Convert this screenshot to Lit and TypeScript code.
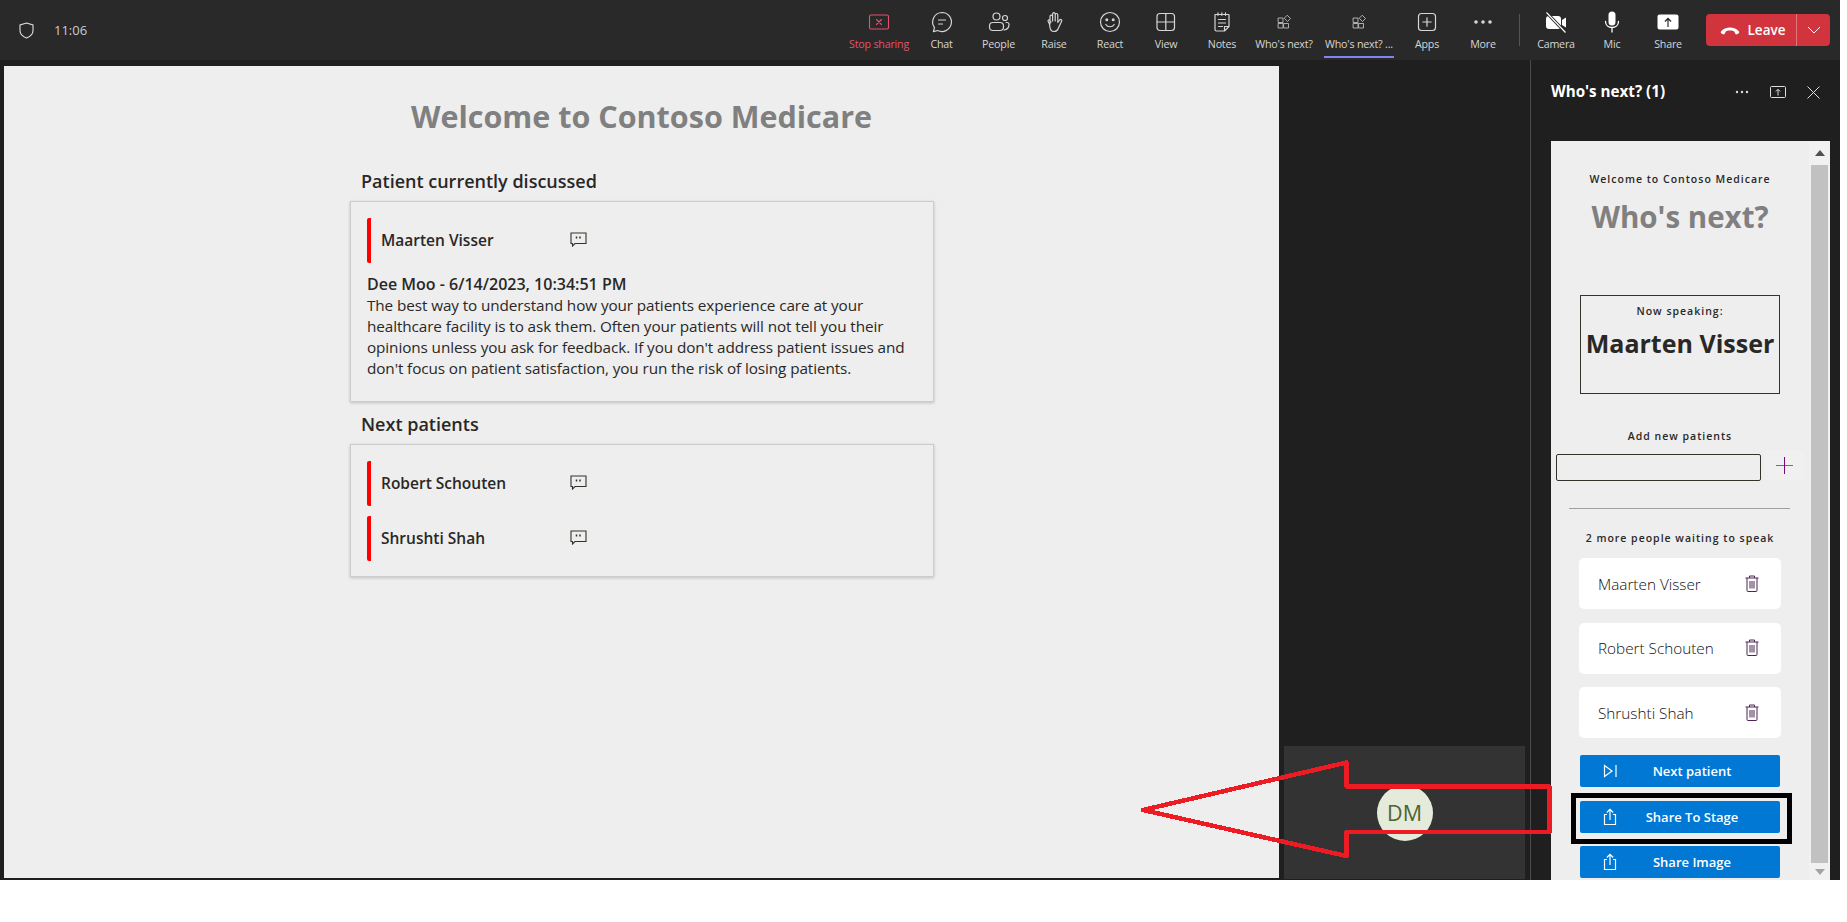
import {LitElement, html, css, svg} from 'lit';
import {customElement} from 'lit/decorators.js';

// toolbar icons, all on a 24 box
const stroke = (body: unknown, color = '#d6d6d6', w = 1.2) => html`
  <svg width="24" height="24" viewBox="0 0 24 24" fill="none" stroke=${color} stroke-width=${w} stroke-linecap="round" stroke-linejoin="round">${body}</svg>`;

const fill = (body: unknown) => html`
  <svg width="24" height="24" viewBox="0 0 24 24" fill="#fff">${body}</svg>`;

const appIcon = stroke(svg`
  <rect x="6.5" y="8" width="4.5" height="4.5"/><rect x="6.5" y="13.5" width="4.5" height="4.5"/>
  <rect x="12" y="13.5" width="4.5" height="4.5"/><path d="M15.5 5.5l3 3-3 3-3-3z"/>`, '#bdbdbd', 0.9);

type Tool = {label: string; icon: unknown; width: number; cls?: string};

const tools: Tool[] = [
  {label: 'Stop sharing', width: 66, cls: 'danger', icon: stroke(svg`
    <rect x="2.5" y="5" width="19" height="14" rx="1.5"/><path d="M9.5 9.5l5 5M14.5 9.5l-5 5"/>`, '#e5526b', 1.1)},
  {label: 'Chat', width: 59, icon: stroke(svg`
    <path d="M12 2.5a9.5 9.5 0 1 1-4.3 18L3.4 21.6l1.1-4A9.5 9.5 0 0 1 12 2.5z"/><path d="M8.5 10h7M8.5 14h4"/>`)},
  {label: 'People', width: 55, icon: stroke(svg`
    <circle cx="9.5" cy="6.5" r="3.5"/><circle cx="18" cy="8" r="2.5"/>
    <rect x="2.5" y="12.5" width="14" height="8" rx="3.5"/><path d="M19 12.5h1a2 2 0 0 1 2 2c0 3-1.800 5-5 5.500"/>`)},
  {label: 'Raise', width: 56, icon: stroke(svg`
    <path d="M8 14V6.500a1.300 1.300 0 0 1 2.600 0V11M10.600 11V4a1.300 1.300 0 0 1 2.600 0v7M13.200 11V4.800a1.300 1.300 0 0 1 2.600 0V12M15.800 12.500l1.900-2.500c1-1.200 2.700 0 1.900 1.300L16 19c-.8 1.800-2 2.500-4 2.500-2.500 0-3.600-1.200-4-4l-.6-3.500c-.1-.5-.5-1.200-1.200-2.500-.6-1.200.8-2.200 1.800-1l1 1.500"/>`)},
  {label: 'React', width: 56, icon: stroke(svg`
    <circle cx="12" cy="12" r="9.500"/><circle cx="8.800" cy="9.800" r=".9" fill="#d6d6d6"/><circle cx="15.200" cy="9.800" r=".9" fill="#d6d6d6"/>
    <path d="M7.800 14.500c2 3 6.400 3 8.400 0"/>`)},
  {label: 'View', width: 56, icon: stroke(svg`
    <rect x="3" y="3.500" width="17.500" height="17" rx="3"/><path d="M11.800 3.500v17M3 12h17.500"/>`)},
  {label: 'Notes', width: 56, icon: stroke(svg`
    <path d="M5 4.500h13.500a.5.5 0 0 1 .5.5v11.500L14.500 21H6.500A1.500 1.500 0 0 1 5 19.500zM19 16.500h-4.500V21"/>
    <path d="M8 2.800v2.500M11.800 2.800v2.500M15.500 2.800v2.500M8.500 9.500h7M8.500 13h7M8.500 16.500h4"/>`)},
  {label: "Who's next?", width: 68, icon: appIcon},
  {label: "Who's next? ...", width: 70, cls: 'active', icon: appIcon},
  {label: 'Apps', width: 56, icon: stroke(svg`
    <rect x="3.500" y="3.500" width="17" height="17" rx="3"/><path d="M12 7.800v8.400M7.800 12h8.400"/>`)},
  {label: 'More', width: 56, icon: fill(svg`
    <circle cx="5" cy="12" r="1.800" fill="#d6d6d6"/><circle cx="12" cy="12" r="1.800" fill="#d6d6d6"/><circle cx="19" cy="12" r="1.800" fill="#d6d6d6"/>`)},
];

const devices: Tool[] = [
  {label: 'Camera', width: 56, icon: fill(svg`
    <rect x="2" y="6" width="15" height="13" rx="3"/><path d="M18 10l4-2.500v10L18 15z"/>
    <path d="M2.500 2.500l19 20" stroke="#292929" stroke-width="3.200"/><path d="M2.500 2.500l19 20" stroke="#fff" stroke-width="1.100"/>`)},
  {label: 'Mic', width: 56, icon: fill(svg`
    <rect x="8.500" y="1.500" width="7" height="14" rx="3.500"/>
    <path d="M5.500 11.500c0 8 13 8 13 0M12 18v4" fill="none" stroke="#fff" stroke-width="1.300" stroke-linecap="round"/>`)},
  {label: 'Share', width: 56, icon: fill(svg`
    <path fill-rule="evenodd" d="M3.500 4.500h17a2 2 0 0 1 2 2v11a2 2 0 0 1-2 2h-17a2 2 0 0 1-2-2v-11a2 2 0 0 1 2-2zM12 7.500l-3.500 3.500.9.900 2-2V17h1.200V9.900l2 2 .9-.9z"/>`)},
];

const comment = html`<svg class="comment" width="17" height="15" viewBox="0 0 17 15" fill="none" stroke="#33332b" stroke-width="1.100">
  <path d="M1 1h15v10.500H5L2.500 14v-2.500H1z"/><path d="M6.500 4.500v2M10 4.500v2" stroke-width="1.500"/></svg>`;

const trash = html`<svg width="14" height="17" viewBox="0 0 14 17" fill="none" stroke="#4d2550" stroke-width="1">
  <path d="M.5 3h13M4.500 3V1h5v2M2 3v12.500a1 1 0 0 0 1 1h8a1 1 0 0 0 1-1V3M5 6v7.500M7 6v7.500M9 6v7.500"/></svg>`;

const shareUp = html`<svg width="14" height="18" viewBox="0 0 14 18" fill="none" stroke="#fff" stroke-width="1.200">
  <path d="M4 6.500H1.500v10h11v-10H10M7 12V1.500M3.800 4.500L7 1.300l3.200 3.200"/></svg>`;

const nextIcon = html`<svg width="14" height="14" viewBox="0 0 14 14" fill="none" stroke="#fff" stroke-width="1.200">
  <path d="M1.500 1.500L9 7l-7.500 5.500zM13 1v12"/></svg>`;

@customElement('app-root')
export class AppRoot extends LitElement {
  static styles = css`
    :host {
      display: block;
      position: relative;
      width: 1840px;
      height: 880px;
      background: #1f1f1f;
      font-family: 'Open Sans', 'Noto Sans', sans-serif;
      overflow: hidden;
    }

    /* top bar */
    .bar {
      height: 60px;
      background: #292929;
      display: flex;
      align-items: flex-start;
      color: #d6d6d6;
    }
    .shield { margin: 22px 0 0 19px; }
    .time { margin: 21px 0 0 20px; font-size: 13px; line-height: 18px; color: #ccc; }
    .tools { margin-left: auto; display: flex; }
    .tool {
      height: 60px;
      box-sizing: border-box;
      padding-top: 10px;
      display: flex;
      flex-direction: column;
      align-items: center;
      font-size: 10.7px;
      line-height: 14px;
      white-space: nowrap;
      letter-spacing: -0.2px;
    }
    .tool span { margin-top: 3px; }
    .tool.danger { color: #e5526b; }
    .tool.active { border-bottom: 2px solid #7f85f5; height: 58px; margin: 0 5px 0 6px; }
    .sep { width: 1px; height: 32px; background: #555; margin: 14px 8px 0 8px; }
    .leave {
      margin: 14px 10px 0 10px;
      width: 124px;
      height: 32px;
      border-radius: 4px;
      background: #d1343d;
      color: #fff;
      font-size: 13.5px;
      font-weight: 600;
      display: flex;
      align-items: center;
    }
    .leave .main {
      width: 91px;
      height: 32px;
      box-sizing: border-box;
      padding-left: 3px;
      display: flex;
      align-items: center;
      justify-content: center;
      gap: 8px;
      border-right: 1px solid #e2757b;
    }
    .leave .caret { flex: 1; display: flex; justify-content: center; }

    /* below the bar */
    .body { display: flex; height: 820px; }

    .stage {
      margin: 6px 0 2px 4px;
      width: 1275px;
      background: #eee;
      color: #292827;
    }
    .stage h1 {
      margin: 28px 0 0;
      font-size: 30.5px;
      line-height: 44px;
      font-weight: 700;
      color: #808080;
      text-align: center;
    }
    .col { margin-left: 346px; width: 584px; }
    .col h2 {
      margin: 0 0 0 11px;
      font-size: 18px;
      line-height: 24px;
      font-weight: 600;
    }
    .h-first { padding-top: 31px; }
    .h-next { padding-top: 10px; }
    .card {
      background: #eee;
      border: 1px solid #ccc;
      box-shadow: 0 1px 3px rgba(0, 0, 0, .2);
      padding: 16px 14px 15px 16px;
    }
    .first { margin-top: 8px; padding-bottom: 22px; }
    .second { margin-top: 8px; display: flex; flex-direction: column; gap: 10px; }
    .patient {
      height: 45px;
      display: flex;
      align-items: center;
      border-left: 4px solid #f00;
      border-radius: 2px;
      padding-left: 10px;
    }
    .patient b { width: 189px; margin-top: -2px; font-size: 15.5px; font-weight: 600; }
    .comment { margin-top: -2px; }
    .note { margin-top: 11px; font-size: 15.3px; line-height: 21px; letter-spacing: -0.1px; white-space: nowrap; }
    .note b { display: block; font-size: 16px; font-weight: 600; letter-spacing: 0; }

    /* participant tile */
    .tile {
      align-self: flex-end;
      margin: 0 5px 1px 5px;
      width: 241px;
      height: 133px;
      background: #333;
      display: flex;
      align-items: center;
      justify-content: center;
    }
    .avatar {
      width: 56px;
      height: 56px;
      border-radius: 50%;
      background: #e5ebdb;
      color: #4f6234;
      font-size: 21.5px;
      line-height: 56px;
      text-align: center;
    }

    /* side panel */
    .panel { width: 309px; border-left: 1px solid #4a4a4a; }
    .panel-head {
      height: 81px;
      box-sizing: border-box;
      padding: 21px 0 0 20px;
      display: flex;
      align-items: flex-start;
    }
    .panel-head strong { font-size: 15.2px; font-weight: 700; color: #fff; line-height: 20px; white-space: nowrap; }
    .panel-head svg { display: block; }
    .panel-actions { margin: 1px 20px 0 auto; display: flex; align-items: center; gap: 21px; height: 20px; }
    .frame {
      margin-left: 20px;
      width: 279px;
      height: 739px;
      display: flex;
      overflow: hidden;
      background: #eee;
      color: #292827;
    }
    .content { width: 258px; flex: none; }
    .scroll {
      width: 21px;
      background: #f1f1f1;
      display: flex;
      flex-direction: column;
      align-items: center;
    }
    .arrow { height: 24px; display: flex; align-items: center; justify-content: center; }
    .arrow.low { height: 17px; }
    .thumb { width: 17px; flex: 1; background: #c1c1c1; }
    .tiny {
      font-size: 10.5px;
      line-height: 14px;
      font-weight: 600;
      letter-spacing: 1px;
      text-align: center;
      white-space: nowrap;
    }
    .welcome { margin-top: 31px; }
    .who {
      margin: 11px 0 0;
      font-size: 29.5px;
      line-height: 40px;
      font-weight: 700;
      color: #808080;
      text-align: center;
    }
    .speaking {
      margin: 58px 0 0 29px;
      width: 198px;
      height: 89px;
      border: 1px solid #33332b;
      padding-top: 8px;
    }
    .speaking div:last-child {
      margin-top: 7px;
      font-size: 25px;
      line-height: 36px;
      font-weight: 700;
      text-align: center;
      white-space: nowrap;
    }
    .add { margin-top: 35px; }
    .add-row { margin: 7px 0 0 5px; display: flex; height: 31px; }
    .input {
      margin-top: 4px;
      width: 203px;
      height: 25px;
      border: 1px solid #33332b;
      border-radius: 2px;
    }
    .plus {
      margin-left: 4px;
      width: 39px;
      height: 30px;
      border-radius: 3px;
      background: #f0f0f0;
      display: flex;
      align-items: center;
      justify-content: center;
    }
    .rule { margin: 27px 0 0 18px; width: 221px; height: 1px; background: #a0a0a0; }
    .waiting { margin-top: 22px; }
    .list { margin: 13px 0 0 28px; width: 202px; display: flex; flex-direction: column; gap: 13.5px; }
    .person {
      height: 51px;
      box-sizing: border-box;
      padding: 0 22px 0 19px;
      border-radius: 5px;
      background: #fff;
      display: flex;
      align-items: center;
      justify-content: space-between;
      font-size: 15.3px;
      font-weight: 300;
      color: #111;
      white-space: nowrap;
    }
    .person svg { margin-top: -1px; }
    .buttons { margin: 17px 0 0 29px; width: 200px; display: flex; flex-direction: column; gap: 13.5px; }
    .btn {
      height: 32px;
      border-radius: 2px;
      background: #0078d4;
      color: #fff;
      font-size: 13px;
      font-weight: 600;
      display: flex;
      align-items: center;
    }
    .btn svg { margin-left: 23px; flex: none; }
    .btn span { flex: 1; text-align: center; padding-right: 13px; }

    /* annotations drawn over the screenshot */
    .callout { position: absolute; left: 0; top: 0; pointer-events: none; }
    .focus {
      position: absolute;
      left: 1571px;
      top: 793px;
      width: 211px;
      height: 41px;
      border: 5px solid #000;
    }
  `;

  private tool(t: Tool) {
    return html`<div class="tool ${t.cls ?? ''}" style="width:${t.width}px">${t.icon}<span>${t.label}</span></div>`;
  }

  private patient(name: string) {
    return html`<div class="patient"><b>${name}</b>${comment}</div>`;
  }

  render() {
    return html`
      <div class="bar">
        <svg class="shield" width="15" height="17" viewBox="0 0 15 17" fill="none" stroke="#e0e0e0" stroke-width="1.100">
          <path d="M7.500 1L14 3v5.500c0 3.500-2.500 6-6.500 7.500C3.500 14.500 1 12 1 8.500V3z"/></svg>
        <div class="time">11:06</div>
        <div class="tools">${tools.map(t => this.tool(t))}</div>
        <div class="sep"></div>
        ${devices.map(t => this.tool(t))}
        <div class="leave">
          <div class="main">
            <svg width="20" height="10" viewBox="0 0 20 10" fill="#fff"><path d="M1 6.500C5 1 15 1 19 6.500c.5.800.2 1.500-.5 2l-1.500.8c-.7.300-1.300.100-1.700-.5L14.500 7c-.2-.5-.6-.8-1.100-1-2-.6-4.800-.6-6.800 0-.5.200-.9.500-1.100 1l-.8 1.800c-.4.600-1 .8-1.700.5l-1.500-.8C.8 8 .5 7.300 1 6.500z"/></svg>
            Leave
          </div>
          <div class="caret">
            <svg width="14" height="8" viewBox="0 0 14 8" fill="none" stroke="#fff" stroke-width="1"><path d="M1 1l6 6 6-6"/></svg>
          </div>
        </div>
      </div>

      <div class="body">
        <section class="stage">
          <h1>Welcome to Contoso Medicare</h1>
          <div class="col">
            <div class="h-first"><h2>Patient currently discussed</h2></div>
            <div class="card first">
              ${this.patient('Maarten Visser')}
              <div class="note">
                <b>Dee Moo - 6/14/2023, 10:34:51 PM</b>
                The best way to understand how your patients experience care at your<br>
                healthcare facility is to ask them. Often your patients will not tell you their<br>
                opinions unless you ask for feedback. If you don't address patient issues and<br>
                don't focus on patient satisfaction, you run the risk of losing patients.
              </div>
            </div>
            <div class="h-next"><h2>Next patients</h2></div>
            <div class="card second">
              ${this.patient('Robert Schouten')}
              ${this.patient('Shrushti Shah')}
            </div>
          </div>
        </section>

        <div class="tile"><div class="avatar">DM</div></div>

        <aside class="panel">
          <div class="panel-head">
            <strong>Who's next? (1)</strong>
            <div class="panel-actions">
              <svg width="14" height="4" viewBox="0 0 14 4" fill="#ddd"><circle cx="2" cy="2" r="1.200"/><circle cx="7" cy="2" r="1.200"/><circle cx="12" cy="2" r="1.200"/></svg>
              <svg width="16" height="13" viewBox="0 0 16 13" fill="none" stroke="#ddd" stroke-width="1"><rect x=".5" y=".5" width="15" height="11" rx="1"/><path d="M8 9.500V3.500M5.800 5.500L8 3.300l2.200 2.200"/></svg>
              <svg width="13" height="13" viewBox="0 0 13 13" fill="none" stroke="#ddd" stroke-width="1"><path d="M.5.500l12 12M12.500.500l-12 12"/></svg>
            </div>
          </div>
          <div class="frame">
            <div class="content">
              <div class="tiny welcome">Welcome to Contoso Medicare</div>
              <h1 class="who">Who's next?</h1>
              <div class="speaking">
                <div class="tiny">Now speaking:</div>
                <div>Maarten Visser</div>
              </div>
              <div class="tiny add">Add new patients</div>
              <div class="add-row">
                <div class="input"></div>
                <div class="plus">
                  <svg width="17" height="17" viewBox="0 0 17 17" fill="none" stroke-width="1"><path d="M0 8.500h17" stroke="#7a6a7a"/><path d="M8.500 0v17" stroke="#7a0a78"/></svg>
                </div>
              </div>
              <div class="rule"></div>
              <div class="tiny waiting">2 more people waiting to speak</div>
              <div class="list">
                <div class="person">Maarten Visser ${trash}</div>
                <div class="person">Robert Schouten ${trash}</div>
                <div class="person">Shrushti Shah ${trash}</div>
              </div>
              <div class="buttons">
                <div class="btn">${nextIcon}<span>Next patient</span></div>
                <div class="btn">${shareUp}<span>Share To Stage</span></div>
                <div class="btn">${shareUp}<span>Share Image</span></div>
              </div>
            </div>
            <div class="scroll">
              <div class="arrow"><svg width="10" height="6" viewBox="0 0 10 6" fill="#505050"><path d="M5 0l5 6H0z"/></svg></div>
              <div class="thumb"></div>
              <div class="arrow low"><svg width="10" height="6" viewBox="0 0 10 6" fill="#a3a3a3"><path d="M0 0h10L5 6z"/></svg></div>
            </div>
          </div>
        </aside>
      </div>

      <svg class="callout" width="1847" height="880" fill="none" stroke="#ed1c24" stroke-width="4.500" stroke-linejoin="round" shape-rendering="crispEdges">
        <path d="M1143 810L1346.500 762.500V786.500H1549.500V832H1346.500V856Z"/>
      </svg>
      <div class="focus"></div>
    `;
  }
}
